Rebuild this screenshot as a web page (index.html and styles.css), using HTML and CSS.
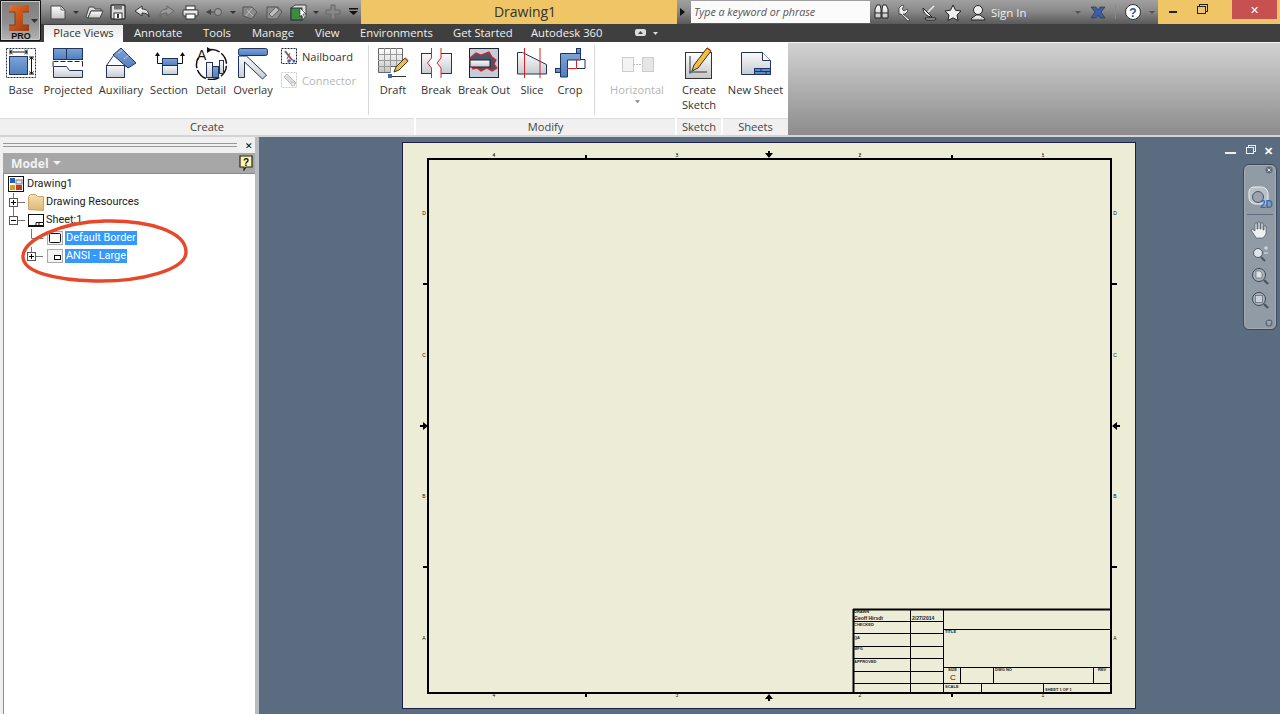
FILE: index.html
```html
<!DOCTYPE html>
<html lang="en">
<head>
<meta charset="utf-8">
<title>Drawing1</title>
<link rel="stylesheet" href="styles.css">
</head>
<body>
<svg class="defs" width="0" height="0" aria-hidden="true">
  <defs>
    <linearGradient id="blue" x1="0" y1="0" x2="0" y2="1"><stop offset="0" stop-color="#7fa3d6"/><stop offset="1" stop-color="#4f7fc0"/></linearGradient>
    <linearGradient id="grey" x1="0" y1="0" x2="0" y2="1"><stop offset="0" stop-color="#fafafa"/><stop offset="1" stop-color="#c6cbd2"/></linearGradient>
    <linearGradient id="wht" x1="0" y1="0" x2="0" y2="1"><stop offset="0" stop-color="#ffffff"/><stop offset="1" stop-color="#c4c4c4"/></linearGradient>
    <linearGradient id="folder" x1="0" y1="0" x2="0" y2="1"><stop offset="0" stop-color="#f6e0b0"/><stop offset="1" stop-color="#dcb878"/></linearGradient>
    <linearGradient id="orange" x1="0" y1="0" x2="1" y2="1"><stop offset="0" stop-color="#e9702a"/><stop offset="1" stop-color="#9a3a12"/></linearGradient>
  </defs>
</svg>
<div class="app">
  <header class="chrome">
    <div class="appbtn">
      <svg width="40" height="40" viewBox="0 0 40 40">
        <path d="M8 4h20v7h-6v13h6v6H8v-6h6V11H8z" fill="url(#orange)"/>
        <path d="M8 11h6v13H8M22 11h6M22 24h6" fill="none" stroke="#7c2e0e" stroke-width=".8"/>
        <path d="M30 18h7l-3.500 4z" fill="#333"/>
        <text x="20" y="38" class="pro">PRO</text>
      </svg>
    </div>
    <div class="titlebar">
      <div class="qat">
        <svg class="qat-icons" width="320" height="24" viewBox="41 0 320 24">
          <path d="M51 6h10l4 4v9H51z" fill="url(#wht)" stroke="#444"/><path d="M61 6v4h4" fill="none" stroke="#666"/>
          <path d="M73 11h6l-3 3z" fill="#333"/>
          <path d="M86 17l3-10h5l1 2h6v2H91l-3 7z" fill="#ddd" stroke="#444"/><path d="M88 18l3-7h12l-3 7z" fill="url(#wht)" stroke="#444"/>
          <rect x="111" y="5" width="14" height="14" rx="1" fill="#ddd" stroke="#333" stroke-width="1.4"/><rect x="114" y="5.500" width="8" height="4" fill="#777"/><rect x="114" y="13" width="8" height="6" fill="#fff" stroke="#333"/><rect x="117" y="14" width="2" height="4" fill="#333"/>
          <path d="M142 9c5 0 7 3 7 8-1-3-3-4-7-4v3l-7-5 7-5z" fill="url(#wht)" stroke="#333"/>
          <path d="M167 9c-5 0-7 3-7 8 1-3 3-4 7-4v3l7-5-7-5z" fill="#999" stroke="#666"/>
          <rect x="186" y="6" width="9" height="4" fill="#fff" stroke="#333"/><rect x="183" y="10" width="15" height="6" rx="1" fill="url(#wht)" stroke="#333"/><rect x="186" y="14" width="9" height="5" fill="#fff" stroke="#333"/>
          <circle cx="218" cy="12" r="3.500" fill="#9a9a9a" stroke="#555"/><path d="M206 12l5-3v6z" fill="#444"/><path d="M211 12h3" stroke="#444"/>
          <path d="M230 11h6l-3 3z" fill="#333"/>
          <path d="M243 7h9l5 5-5 7-9-3z" fill="#8a8a8a" stroke="#555"/><path d="M247 10l6 6M252 8l-6 8" stroke="#bbb"/>
          <path d="M267 7h11l4 5-5 7h-10z" fill="#8e8e8e" stroke="#555"/><path d="M269 14l7-7 3 3-7 7z" fill="#bbb" stroke="#666"/>
          <path d="M291 8l4-3h11v12l-4 3h-11z" fill="#ddd" stroke="#444"/><rect x="291" y="8" width="11" height="12" fill="#3d8b3d" stroke="#234"/>
          <path d="M300 8l6 6-3 0 2 4-1.500 1-2-4-1.500 2z" fill="#fff" stroke="#222" stroke-width=".6"/>
          <path d="M313 11h6l-3 3z" fill="#333"/>
          <path d="M331 5h4v5h5v4h-5v5h-4v-5h-5v-4h5z" fill="#888" stroke="#666"/>
          <rect x="349" y="8" width="9" height="1.500" fill="#111"/><path d="M349 11h9l-4.500 4z" fill="#111"/>
        </svg>
      </div>
      <div class="doc-title">Drawing1</div>
      <div class="infocenter">
        <span class="chev"></span>
        <div class="search">Type a keyword or phrase</div>
        <svg class="ic-strip" width="104" height="24" viewBox="870 0 104 24">
          <path d="M875 9l2-4h3l1 4v9h-6zM882 9l1-4h3l2 4v9h-6z" fill="url(#wht)" stroke="#222"/><path d="M875 13h6M882 13h6" stroke="#222"/>
          <path d="M899 8l3-3 2 1-2 3 2 2 3-2 1 2-3 3-2 0 7 6-2 1-7-7-2 0z" fill="#eee" stroke="#222" stroke-width=".7"/>
          <path d="M923 8c0 5 4 9 9 9l-9-9z" fill="#eee" stroke="#222"/><path d="M928 12l6-6" stroke="#eee" stroke-width="1.500"/><path d="M925 18h11l-1 2h-9z" fill="#ddd" stroke="#222"/>
          <path d="M953 5l2.500 5.200 5.500.800-4 4 1 5.500-5-2.700-5 2.700 1-5.500-4-4 5.500-.800z" fill="#eee" stroke="#222"/>
        </svg>
        <svg class="ic-user" width="18" height="24" viewBox="970 0 18 24">
          <circle cx="978" cy="10" r="4.500" fill="#eee" stroke="#222"/><path d="M971 20c0-3 4-3 5-5h4c1 2 5 2 5 5z" fill="url(#wht)" stroke="#222"/>
        </svg>
        <span class="signin">Sign In</span>
        <span class="dn dn-a"></span>
        <svg class="ic-x" width="18" height="24" viewBox="1089 0 18 24"><path d="M1091 7h5l2 3 2-3h5l-4 5 4 6h-5l-2-3-2 3h-5l4-6z" fill="#3a5ea8" stroke="#233" stroke-width=".6"/></svg>
        <span class="vsep"></span>
        <svg class="ic-help" width="18" height="24" viewBox="1124 0 18 24"><circle cx="1133" cy="12" r="7.500" fill="#fff" stroke="#333"/><text x="1133" y="16.500" class="help-q">?</text></svg>
        <span class="dn dn-b"></span>
      </div>
      <div class="winctl">
        <span class="wbtn"><i class="w-min"></i></span>
        <span class="wbtn"><i class="w-max"></i></span>
        <span class="wbtn close">✕</span>
      </div>
    </div>
    <nav class="tabs">
      <span class="tab active">Place Views</span>
      <span class="tab t-ann">Annotate</span>
      <span class="tab t-tools">Tools</span>
      <span class="tab t-man">Manage</span>
      <span class="tab t-view">View</span>
      <span class="tab t-env">Environments</span>
      <span class="tab t-gs">Get Started</span>
      <span class="tab t-a360">Autodesk 360</span>
      <svg class="tab-ic" width="24" height="10" viewBox="0 0 24 10"><rect x="1" y="1" width="11" height="7" rx="2" fill="#ddd"/><path d="M4 6l2.500-3L9 6z" fill="#444"/><path d="M19 4h5l-2.500 3z" fill="#ddd"/></svg>
    </nav>
    <div class="ribbon">
      <section class="panel p-create">
        <div class="tools">
          <div class="tool w42"><svg class="ri" viewBox="1 46 40 34"><rect x="6.500" y="48.500" width="29" height="29" fill="none" stroke="#234" stroke-dasharray="2 1"/><rect x="9.500" y="56.500" width="18" height="18" fill="url(#blue)" stroke="#1f3560"/><path d="M10 52h17M31.500 57v17" stroke="#111"/><path d="M10 49.500v5M27 49.500v5M29 57h5M29 74h5M12.500 50l-2.500 2 2.500 2M24.500 50l2.500 2-2.500 2M29.500 59.500l2-2.500 2 2.500M29.500 71.500l2 2.500 2-2.500" fill="none" stroke="#111"/></svg><span class="lbl">Base</span></div>
          <div class="tool w52"><svg class="ri" viewBox="48 46 40 34"><rect x="53.500" y="48.500" width="13" height="11" fill="url(#blue)" stroke="#1f3560"/><rect x="66.500" y="48.500" width="16" height="11" fill="url(#blue)" stroke="#1f3560"/><path d="M53.500 61.500h29M53 61.500v5M82.500 61.500v5" stroke="#223" fill="none" stroke-dasharray="5 2"/><path d="M53.500 66.500h13l3 4h13v7h-29z" fill="url(#grey)" stroke="#1f3560"/></svg><span class="lbl">Projected</span></div>
          <div class="tool w54"><svg class="ri" viewBox="101 46 40 34"><rect x="106.500" y="65.500" width="18" height="12" fill="url(#grey)" stroke="#1f3560"/><path d="M106.500 65.500l7-10M124.500 65.500l4 2" fill="none" stroke="#1f3560"/><path d="M121 48l15 15-8 5-15-13z" fill="url(#blue)" stroke="#1f3560"/><path d="M118 53l8-5M124 59l6-5" stroke="#dde" stroke-dasharray="2 1"/></svg><span class="lbl">Auxiliary</span></div>
          <div class="tool w42"><svg class="ri" viewBox="149 46 40 34"><path d="M157.500 54v9.500h5M182.500 54v9.500h-5" fill="none" stroke="#111"/><path d="M155 56l2.500-4 2.500 4zM180 56l2.500-4 2.500 4z" fill="#111"/><rect x="162.500" y="58.500" width="15" height="7" fill="url(#blue)" stroke="#1f3560"/><rect x="162.500" y="65.500" width="15" height="9" fill="url(#grey)" stroke="#1f3560"/></svg><span class="lbl">Section</span></div>
          <div class="tool w42"><svg class="ri" viewBox="191 46 40 34"><path d="M208 50a15 15 0 1 1-10 8" fill="none" stroke="#111" stroke-width="1.500" stroke-dasharray="12 2"/><path d="M207 47l5 3-5 3z" fill="#111"/><text x="197" y="60" class="det-a">A</text><rect x="206.500" y="62.500" width="6" height="15" fill="url(#grey)" stroke="#1f3560"/><rect x="212.500" y="66.500" width="6" height="11" fill="url(#blue)" stroke="#1f3560"/><rect x="219.500" y="60.500" width="4" height="13" fill="url(#grey)" stroke="#1f3560"/></svg><span class="lbl">Detail</span></div>
          <div class="tool w42"><svg class="ri" viewBox="233 46 40 34"><path d="M238.500 56v21.500h6V62l18 17 4-4-20-19z" fill="url(#grey)" stroke="#1f3560"/><rect x="238.500" y="48.500" width="29" height="7" rx="2" fill="url(#blue)" stroke="#1f3560"/></svg><span class="lbl">Overlay</span></div>
          <div class="small-col">
            <div class="small"><svg width="18" height="18" viewBox="280 48 18 18"><rect x="281.500" y="49.500" width="15" height="15" fill="none" stroke="#223" stroke-dasharray="2 1"/><path d="M285 52l7 9" stroke="#667" stroke-width="2"/><path d="M287 60l3-6M290 59l4 3" stroke="#c33"/><circle cx="289" cy="62" r="1.800" fill="#3a66b0"/><circle cx="294" cy="62" r="1.500" fill="#3a66b0"/></svg><span class="lbl">Nailboard</span></div>
            <div class="small dis"><svg width="18" height="18" viewBox="280 72 18 18"><rect x="281.500" y="73.500" width="15" height="15" fill="none" stroke="#ccc" stroke-dasharray="2 1"/><path d="M284 78l3-3 9 9-3 3z" fill="#ddd" stroke="#bbb"/><circle cx="293" cy="85" r="2" fill="#eee" stroke="#bbb"/></svg><span class="lbl">Connector</span></div>
          </div>
          <span class="psep"></span>
          <div class="tool w42"><svg class="ri" viewBox="373 46 40 34"><path d="M378.500 48.500h24v18h-12v6h-12z" fill="url(#wht)" stroke="#666"/><path d="M378 54.500h24M378 60.500h24M378 66.500h12M384.500 48v24M390.500 48v24M396.500 48v18" stroke="#999"/><path d="M394 72l2-5 9-9 3 3-9 9z" fill="#f2c03c" stroke="#333"/><path d="M405 58l3 3" stroke="#c0392b" stroke-width="1.500"/><rect x="388" y="74" width="4" height="4" fill="#2f6dc0"/><path d="M392 76.500h14" stroke="#333"/></svg><span class="lbl">Draft</span></div>
        </div>
        <div class="plabel">Create</div>
      </section>
      <section class="panel p-modify">
        <div class="tools">
          <div class="tool w40"><svg class="ri" viewBox="416 46 40 34"><rect x="421.500" y="53.500" width="30" height="20" fill="url(#grey)" stroke="#1f3560"/><path d="M431.500 48v10l-4 5 4 5v10h9.500v-10l-4-5 4-5V48z" fill="#fff"/><path d="M431.500 48v10l-4 5 4 5v10M441 48v10l-4 5 4 5v10" fill="none" stroke="#d22"/></svg><span class="lbl">Break</span></div>
          <div class="tool w56"><svg class="ri" viewBox="464 46 40 34"><rect x="469.500" y="48.500" width="29" height="29" fill="#c5cdd8" stroke="#223"/><path d="M470 58l6-5 5 2 8-3 3 5 4 3-2 4 3 4-5 3-5-3-6 3-4-3-4 1-3-5z" fill="#47556c" stroke="#d22" stroke-width="1.200"/><rect x="470" y="60" width="20" height="7" fill="url(#grey)" stroke="#223"/></svg><span class="lbl">Break Out</span></div>
          <div class="tool w40"><svg class="ri" viewBox="512 46 40 34"><path d="M517.500 52.500l5 0 24 12v9.500h-29z" fill="url(#grey)" stroke="#1f3560"/><path d="M524.500 48v30M540 48v30" stroke="#d22"/></svg><span class="lbl">Slice</span></div>
          <div class="tool w36"><svg class="ri" viewBox="550 46 40 34"><path d="M560.500 77V53.500h20v6.500h-13v17z" fill="url(#blue)" stroke="#1f3560"/><rect x="576.500" y="48.500" width="4" height="5" fill="url(#blue)" stroke="#1f3560"/><rect x="555.500" y="68.500" width="5" height="4" fill="url(#blue)" stroke="#1f3560"/><path d="M567 68.500h9.500V60" fill="none" stroke="#d22"/><path d="M581 59.500h4v9h-8" fill="none" stroke="#1f3560"/></svg><span class="lbl">Crop</span></div>
          <span class="psep s2"></span>
          <div class="tool w78 dis"><svg class="ri" viewBox="616 46 40 34"><rect x="621.500" y="57.500" width="11" height="14" fill="#f3f3f3" stroke="#ccc"/><rect x="641.500" y="57.500" width="11" height="14" fill="#e6e6e6" stroke="#ccc"/><path d="M632 64.500h9" stroke="#bbb" stroke-dasharray="2 1"/></svg><span class="lbl">Horizontal</span><span class="mini-dn"></span></div>
        </div>
        <div class="plabel">Modify</div>
      </section>
      <section class="panel p-sketch">
        <div class="tools">
          <div class="tool w44"><svg class="ri" viewBox="678 46 40 34"><rect x="684.500" y="52.500" width="26" height="26" fill="url(#wht)" stroke="#333"/><path d="M689 56v16h17" fill="none" stroke="#333"/><rect x="688" y="71" width="2.500" height="2.500" fill="#2f6dc0"/><path d="M691 71l2-6 13-17 4 3-13 17z" fill="#f2c03c" stroke="#333"/><path d="M706 48l4 3" stroke="#b33" stroke-width="1.500"/></svg><span class="lbl two">Create<br>Sketch</span></div>
        </div>
        <div class="plabel">Sketch</div>
      </section>
      <section class="panel p-sheets">
        <div class="tools">
          <div class="tool w65"><svg class="ri" viewBox="735 46 40 34"><path d="M740.500 52.500h21l8 8v14h-29z" fill="url(#grey)" stroke="#1f3560"/><path d="M761.500 52.500v8h8" fill="#fff" stroke="#1f3560"/><rect x="753.500" y="68.500" width="16" height="6" fill="#5d8ac8" stroke="#1f3560"/><path d="M753 71.500h16M760 68.500v3M765 71.500v3" stroke="#1f3560"/></svg><span class="lbl">New Sheet</span></div>
        </div>
        <div class="plabel">Sheets</div>
      </section>
      <div class="ribbon-fill"></div>
    </div>
  </header>

  <main class="workspace">
    <aside class="browser">
      <div class="grip"><span class="grip-lines"></span><span class="grip-x">✕</span></div>
      <div class="model-head"><span class="model-t">Model</span><span class="caret"></span>
        <svg class="hlp" width="14" height="16" viewBox="0 0 14 16"><path d="M1 1h12v11H7l-2 3v-3H1z" fill="#fdf6a8" stroke="#222" stroke-width="1.200"/><text x="7" y="10.500" class="hlp-q">?</text></svg>
      </div>
      <div class="tree">
        <div class="row"><svg class="lv0" viewBox="4 0 22 18"><rect x="8.500" y="1.500" width="15" height="15" fill="#fff" stroke="#111"/><rect x="10" y="3" width="5" height="5" fill="#2d5fa8"/><rect x="10" y="10" width="5" height="5" fill="#d9a017"/><rect x="16" y="10" width="6" height="5" fill="#c23a1e"/><rect x="16" y="5" width="6" height="4" fill="#e5e5e5" stroke="#777"/></svg><span class="node">Drawing1</span></div>
        <div class="row"><svg class="lv1" viewBox="4 0 42 18"><path d="M13.500 0v5M13.500 14v4M18 9.500h7" stroke="#777"/><rect x="9.500" y="5.500" width="8" height="8" fill="#fff" stroke="#555"/><path d="M11 9.500h5M13.500 7v5" stroke="#000"/><path d="M28.500 16.500v-13l2-2h5l2 2h6v14z" fill="url(#folder)" stroke="#c8a468"/></svg><span class="node">Drawing Resources</span></div>
        <div class="row"><svg class="lv1" viewBox="4 0 42 18"><path d="M13.500 0v5M18 9.500h7" stroke="#777"/><rect x="9.500" y="5.500" width="8" height="8" fill="#fff" stroke="#555"/><path d="M11 9.500h5" stroke="#000"/><rect x="28.500" y="3.500" width="15" height="11" fill="#fff" stroke="#111"/><path d="M36 11.500h7M36 11.500v3M39 11.500v3" stroke="#111"/><path d="M28 15.500h16" stroke="#111"/></svg><span class="node">Sheet:1</span></div>
        <div class="row"><svg class="lv2" viewBox="4 0 62 18"><path d="M31.500 0v9.500h12" stroke="#777" fill="none"/><rect x="47.500" y="2.500" width="15" height="13" fill="#f4f4f4" stroke="#aaa"/><rect x="49.500" y="4.500" width="11" height="9" rx="1" fill="#fff" stroke="#111"/></svg><span class="node sel">Default Border</span></div>
        <div class="row"><svg class="lv2" viewBox="4 0 62 18"><path d="M31.500 0v5M36 9.500h7" stroke="#777"/><rect x="27.500" y="5.500" width="8" height="8" fill="#fff" stroke="#555"/><path d="M29 9.500h5M31.500 7v5" stroke="#000"/><rect x="47.500" y="2.500" width="15" height="13" fill="#f4f4f4" stroke="#aaa"/><rect x="54.500" y="8.500" width="6" height="4" fill="#fff" stroke="#111"/></svg><span class="node sel">ANSI - Large</span></div>
      </div>
      <svg class="callout" width="180" height="75" viewBox="20 215 180 75"><path d="M23 256C24 240 60 222 105 221 150 220 186 232 186 252 186 270 140 282 95 281 55 280 22 272 23 256z" fill="none" stroke="#e8472a" stroke-width="3.400"/></svg>
    </aside>
    <div class="canvas">
      <svg class="sheet" width="1021" height="577" viewBox="259 137 1021 577">
        <rect x="402.500" y="142.500" width="733" height="566" fill="#edecd6" stroke="#1a2045"/>
        <rect x="428" y="159" width="683" height="534" fill="none" stroke="#000" stroke-width="2"/>
        <g stroke="#000" fill="none">
          <path d="M586 155v3M952 155v3M586 694v3M952 694v3M423 284h5M423 567h5M1112 284h5M1112 567h5" stroke-width="2"/>
          <path d="M494 154v1M677 154v1M860 154v1M1043 154v1" stroke="#444"/>
        </g>
        <path d="M769 158l-4-5h3v-2h2v2h3zM769 694l-4 5h3v2h2v-2h3zM428 426l-5-4v3h-3v2h3v3zM1112 426l5-4v3h3v2h-3v3z" fill="#000"/>
        <g class="dw">
          <text x="494" y="157">4</text><text x="677" y="157">3</text><text x="860" y="157">2</text><text x="1043" y="157">1</text>
          <text x="494" y="697">4</text><text x="677" y="697">3</text><text x="860" y="697">2</text><text x="1043" y="697">1</text>
          <text x="424" y="215">D</text><text x="424" y="357">C</text><text x="424" y="498">B</text><text x="424" y="640">A</text>
          <text x="1115" y="215">D</text><text x="1115" y="357">C</text><text x="1115" y="498">B</text><text x="1115" y="640">A</text>
        </g>
        <g stroke="#000" stroke-width="1">
          <path d="M853.500 609v84M943.500 609v84M910.500 609v84M1110 629.500H944M1110 667.500H944M1110 683.500H854M960.500 667v16M993.500 667v16M1093.500 667v16M981.500 683v10M1043.500 683v10M854 621.500h90M854 633.500h90M854 646.500h90M854 658.500h90M854 671.500h90"/>
        </g>
        <path d="M853 609.500h258" stroke="#000" stroke-width="2"/><path d="M853.500 609v84" stroke="#000" stroke-width="2"/>
        <g class="tb">
          <text x="854" y="613">DRAWN</text><text x="854" y="620" class="tb-n">Geoff Hirsdt</text><text x="912" y="620" class="tb-n">2/27/2014</text><text x="854" y="626">CHECKED</text><text x="854" y="639">QA</text><text x="854" y="650">MFG</text><text x="854" y="663">APPROVED</text><text x="945" y="633">TITLE</text><text x="948" y="671">SIZE</text><text x="950" y="680" class="tb-c">C</text><text x="995" y="671">DWG NO</text><text x="1098" y="671">REV</text><text x="945" y="688">SCALE</text><text x="1045" y="691">SHEET 1 OF 1</text>
        </g>
      </svg>
      <div class="view-ctl"><i class="v-min"></i><i class="v-max"></i><span class="v-x">✕</span></div>
      <div class="navbar">
        <svg width="34" height="166" viewBox="1243 164 34 166">
          <circle cx="1269" cy="170" r="3.500" fill="#5e6b7b"/><path d="M1267.500 168.500l3 3M1270.500 168.500l-3 3" stroke="#dde"/>
          <path d="M1249 192c0-3 2-5 5-5h7c4 0 7 3 7 7v5c0 3-2 5-5 5h-7c-4 0-7-3-7-7z" fill="#b9c0c8" stroke="#eef0f2"/><circle cx="1258" cy="197" r="5.500" fill="#9aa4b0" stroke="#4c5663"/>
          <text x="1260" y="208" class="nb-2d">2D</text>
          <path d="M1247 214.500h26" stroke="#5e6b7b"/>
          <path d="M1255 236l-4-6 1-1 3 2v-8h2v6h1v-7h2v7h1v-6h2v7h1v-4h2v8l-3 4h-7z" fill="#eef0f2" stroke="#4c5663" stroke-width=".7"/>
          <circle cx="1258" cy="253" r="4.500" fill="#dfe4e8" stroke="#4c5663"/><path d="M1261 257l4 4" stroke="#4c5663" stroke-width="2"/><path d="M1264 248h4M1266 246v4M1264 253h4" stroke="#dfe4e8"/>
          <circle cx="1259" cy="275" r="6.500" fill="#aab2bb" stroke="#39424e"/><path d="M1264 280l4 4" stroke="#4c5663" stroke-width="2.400"/><path d="M1256 271h4l2 2v5h-6z" fill="#dfe4e8" stroke="#4c5663" stroke-width=".6"/>
          <circle cx="1259" cy="299" r="6.500" fill="#aab2bb" stroke="#39424e"/><path d="M1264 304l4 4" stroke="#4c5663" stroke-width="2.400"/><rect x="1255.500" y="295.500" width="7" height="7" fill="#c9d0d7" stroke="#4c5663" stroke-width=".6"/>
          <circle cx="1269" cy="323" r="3.500" fill="#5e6b7b"/><path d="M1267 322h4M1267.500 324h3" stroke="#dde"/>
        </svg>
      </div>
    </div>
  </main>
</div>
</body>
</html>
```
FILE: styles.css
```css
* { box-sizing: border-box; }
html, body { margin: 0; height: 714px; overflow: hidden; }
body { font-family: "Open Sans", "Noto Sans", sans-serif; font-size: 11.1px; color: #333; background: #5b6b80; }
.defs { position: absolute; }
.app { display: flex; flex-direction: column; height: 714px; width: 1280px; position: relative; }
.chrome { position: relative; }

.appbtn { position: absolute; left: 0; top: 0; width: 41px; height: 41px; border: 1px solid #111; border-radius: 0 0 2px 0; background: linear-gradient(#7e7e7e, #8e8e8e 55%, #b4b4b4); box-shadow: inset 0 0 0 1px #c9c9c9; z-index: 2; }
.appbtn svg { display: block; margin: -0.500px; }
.pro { font: 700 9px "Liberation Sans", sans-serif; text-anchor: middle; fill: #111; }

.titlebar { display: flex; height: 24px; background: #efc566; }
.qat { width: 361px; padding-left: 41px; background: linear-gradient(#a8a8a8, #8a8a8a 45%, #5a5a5a); flex: none; }
.qat-icons { display: block; }
.doc-title { width: 316px; flex: none; padding-left: 12px; text-align: center; font-size: 14px; line-height: 24px; color: #333; }
.infocenter { width: 481px; flex: none; display: flex; align-items: center; background: linear-gradient(#a0a0a0, #8a8a8a 45%, #5a5a5a); position: relative; }
.infocenter > * { flex: none; }
.chev { width: 5px; height: 0; margin-left: 3px; border-left: 5px solid #111; border-top: 4px solid transparent; border-bottom: 4px solid transparent; }
.search { width: 179px; height: 22px; margin-left: 6px; background: #fbfbfb; font-style: italic; font-size: 10.7px; color: #555; line-height: 22px; padding-left: 3px; }
.ic-strip { display: block; }
.ic-user { display: block; margin-left: -4px; }
.signin { color: #eee; font-size: 11.4px; margin-left: 3px; width: 76px; }
.dn { width: 6px; height: 0; border-left: 3px solid transparent; border-right: 3px solid transparent; border-top: 3px solid #555; }
.dn-a { margin-left: 8px; margin-right: 8px; }
.ic-x, .ic-help { display: block; }
.vsep { width: 1px; height: 14px; background: #888; margin: 0 8px; }
.dn-b { margin-left: 7px; }
.winctl { flex: 1; display: flex; justify-content: flex-end; padding-right: 3px; align-items: flex-start; }
.wbtn { width: 29px; height: 19px; display: flex; align-items: center; justify-content: center; }
.wbtn.close { width: 45px; margin-left: 16px; background: #c75050; color: #fff; font-size: 11px; }
.w-min { display: block; width: 8px; height: 2px; background: #222; margin-top: 5px; }
.w-max { display: block; width: 9px; height: 8px; border: 1px solid #222; box-shadow: 2px -2px 0 -1px #efc566, 2px -2px 0 0 #222; }

.tabs { display: flex; height: 18px; background: #3f3f3f; align-items: stretch; padding-left: 44px; color: #f0f0f0; font-size: 11.25px; line-height: 18px; position: relative; }
.tab { display: block; white-space: nowrap; }
.tab.active { width: 79px; text-align: center; color: #333; background: linear-gradient(#e8e8e8, #fff); margin-top: 1px; line-height: 16px; margin-right: 11px; }
.t-ann { width: 69px; } .t-tools { width: 49px; } .t-man { width: 63px; } .t-view { width: 45px; } .t-env { width: 93px; } .t-gs { width: 78px; } .t-a360 { width: 103px; }
.tab-ic { align-self: center; display: block; }

.ribbon { display: flex; height: 95px; background: #fff; border-bottom: 2px solid #d4d4d4; }
.panel { display: flex; flex-direction: column; height: 93px; margin-right: 2px; flex: none; }
.p-create { width: 414px; }
.p-modify { width: 259px; }
.p-sketch { width: 44px; }
.p-sheets { width: 65px; margin-right: 0; }
.tools { display: flex; height: 76px; }
.tool { display: flex; flex-direction: column; align-items: center; padding-top: 4px; flex: none; }
.w36 { width: 36px; } .w40 { width: 40px; } .w42 { width: 42px; } .w44 { width: 44px; } .w52 { width: 52px; } .w54 { width: 54px; } .w56 { width: 56px; } .w65 { width: 65px; } .w78 { width: 78px; }
.ri { display: block; width: 40px; height: 34px; flex: none; }
.lbl { line-height: 15px; margin-top: 2px; text-align: center; white-space: nowrap; }
.small-col { width: 92px; flex: none; padding: 5px 0 0 6px; display: flex; flex-direction: column; gap: 6px; }
.small { display: flex; align-items: center; gap: 4px; height: 18px; }
.small .lbl { margin-top: 0; }
.dis .lbl { color: #b5b5b5; }
.psep { width: 1px; height: 70px; margin: 3px 3px 3px 2px; background: #d8d8d8; flex: none; }
.psep.s2 { margin: 3px 3px 3px 6px; }
.mini-dn { width: 5px; height: 0; margin-top: 3px; border-left: 2.500px solid transparent; border-right: 2.500px solid transparent; border-top: 3px solid #999; }
.plabel { height: 17px; background: #f0f0f0; border-top: 1px solid #dcdcdc; text-align: center; line-height: 16px; color: #444; }
.ribbon-fill { flex: 1; height: 93px; border-top: 1px solid #f4f4f4; background: linear-gradient(#d2d2d2, #8c8c8c); }

.workspace { flex: 1; display: flex; min-height: 0; }
.browser { width: 259px; flex: none; background: #f0f0f0; border-right: 4px solid #b8bcc2; position: relative; padding: 0 0 0 3px; }
.grip { height: 16px; display: flex; align-items: center; padding-right: 1px; }
.grip-lines { flex: 1; height: 4px; margin-right: 8px; border-top: 1px solid #999; border-bottom: 1px solid #999; }
.grip-x { font-size: 9px; color: #000; width: 9px; line-height: 1; }
.model-head { height: 20px; background: #a7a7a7; display: flex; align-items: center; padding-left: 8px; color: #f2f2f2; font-weight: 700; font-size: 12.2px; position: relative; }
.caret { margin-left: 4px; width: 8px; height: 0; border-left: 4px solid transparent; border-right: 4px solid transparent; border-top: 4px solid #f2f2f2; }
.hlp { margin-left: auto; margin-right: 2px; display: block; }
.hlp-q { font: 700 10px "Liberation Sans", sans-serif; text-anchor: middle; fill: #111; }
.tree { background: #fff; height: 541px; padding-top: 1px; border: 1px solid #8a8a8a; border-width: 1px 0 0 1px; font-family: Roboto, "Liberation Sans", sans-serif; font-size: 10.9px; color: #222; }
.row { display: flex; align-items: center; height: 18px; }
.row svg { display: block; height: 18px; flex: none; }
.lv0 { width: 22px; margin-right: 1px; }
.lv1 { width: 42px; }
.lv2 { width: 62px; }
.node { line-height: 14px; padding: 0 0 0 1px; white-space: nowrap; margin-left: -1px; }
.sel { background: #3399ff; color: #fff; padding: 0 1px; margin-left: -1px; }
.callout { position: absolute; left: 20px; top: 78px; }

.canvas { flex: 1; position: relative; background: #5b6b80; }
.sheet { display: block; }
.dw text { font: 5px "Liberation Sans", sans-serif; text-anchor: middle; fill: #111; }
.tb text { font: 700 4px "Liberation Sans", sans-serif; fill: #222; }
.tb .tb-n { font-size: 5px; }
.tb .tb-c { font: 8px "Liberation Sans", sans-serif; }
.view-ctl { position: absolute; left: 966px; top: 9px; width: 52px; height: 9px; display: flex; align-items: center; color: #fff; }
.v-min { display: block; width: 11px; height: 2px; background: #eee; margin-top: 5px; }
.v-max { display: block; width: 8px; height: 7px; border: 1px solid #eee; box-shadow: 2px -2px 0 -1px #5b6b80, 2px -2px 0 0 #eee; margin-left: 10px; }
.v-x { font-size: 11px; line-height: 1; font-weight: 700; margin-left: 10px; }
.navbar { position: absolute; left: 984px; top: 27px; width: 34px; height: 166px; border-radius: 6px; background: #919ba6; border: 1px solid #3c4757; box-shadow: inset 0 0 0 1px #a4adb7; overflow: hidden; }
.navbar svg { display: block; margin: -1px; }
.help-q { font: 700 12px "Liberation Sans", sans-serif; text-anchor: middle; fill: #2a4f9c; }
.det-a { font: 14px "Liberation Sans", sans-serif; fill: #111; }
.nb-2d { font: 700 10px "Liberation Sans", sans-serif; fill: #2d6fb5; }
```
